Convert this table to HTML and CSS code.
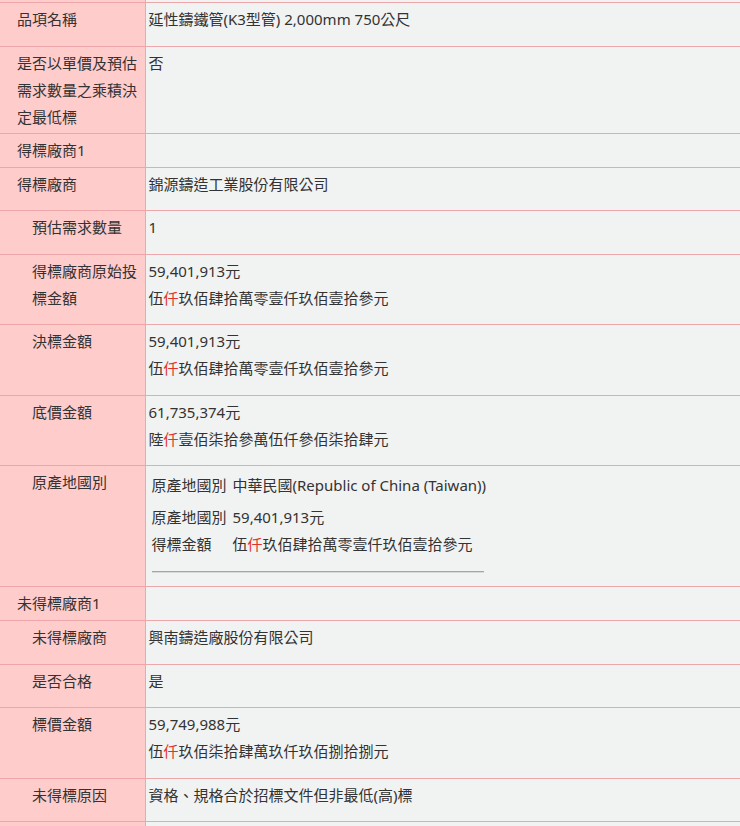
FILE: index.html
```html
<!DOCTYPE html>
<html lang="zh-Hant">
<head>
<meta charset="utf-8">
<title>決標公告</title>
<link rel="stylesheet" href="styles.css">
</head>
<body>
<table class="grid">
  <colgroup><col class="c-label"><col class="c-value"></colgroup>
  <tr class="stub"><td class="label"></td><td class="value"></td></tr>
  <tr>
    <td class="label">品項名稱</td>
    <td class="value filled">延性鑄鐵管(K3型管) 2,000mm 750公尺</td>
  </tr>
  <tr>
    <td class="label multi">是否以單價及預估需求數量之乘積決定最低標</td>
    <td class="value filled">否</td>
  </tr>
  <tr>
    <td class="label">得標廠商1</td>
    <td class="value"></td>
  </tr>
  <tr>
    <td class="label">得標廠商</td>
    <td class="value filled">錦源鑄造工業股份有限公司</td>
  </tr>
  <tr>
    <td class="label sub">預估需求數量</td>
    <td class="value filled">1</td>
  </tr>
  <tr>
    <td class="label sub">得標廠商原始投標金額</td>
    <td class="value filled">59,401,913元<br>伍<span class="red">仟</span>玖佰肆拾萬零壹仟玖佰壹拾參元</td>
  </tr>
  <tr>
    <td class="label sub">決標金額</td>
    <td class="value filled">59,401,913元<br>伍<span class="red">仟</span>玖佰肆拾萬零壹仟玖佰壹拾參元</td>
  </tr>
  <tr>
    <td class="label sub">底價金額</td>
    <td class="value filled">61,735,374元<br>陸<span class="red">仟</span>壹佰柒拾參萬伍仟參佰柒拾肆元</td>
  </tr>
  <tr>
    <td class="label sub">原產地國別</td>
    <td class="value filled origin-cell">
      <div class="origin">
        <div class="origin-row first"><span>原產地國別</span><span>中華民國(Republic of China (Taiwan))</span></div>
        <div class="origin-row second"><span>原產地國別</span><span>59,401,913元</span></div>
        <div class="origin-row"><span>得標金額</span><span>伍<span class="red">仟</span>玖佰肆拾萬零壹仟玖佰壹拾參元</span></div>
        <div class="rule"></div>
      </div>
    </td>
  </tr>
  <tr>
    <td class="label">未得標廠商1</td>
    <td class="value"></td>
  </tr>
  <tr>
    <td class="label sub">未得標廠商</td>
    <td class="value filled">興南鑄造廠股份有限公司</td>
  </tr>
  <tr>
    <td class="label sub">是否合格</td>
    <td class="value filled">是</td>
  </tr>
  <tr>
    <td class="label sub">標價金額</td>
    <td class="value filled">59,749,988元<br>伍<span class="red">仟</span>玖佰柒拾肆萬玖仟玖佰捌拾捌元</td>
  </tr>
  <tr>
    <td class="label sub">未得標原因</td>
    <td class="value filled">資格、規格合於招標文件但非最低(高)標</td>
  </tr>
  <tr class="tail">
    <td class="label sub"></td>
    <td class="value"></td>
  </tr>
</table>
</body>
</html>
```

FILE: styles.css
```css
html, body {
  margin: 0;
  padding: 0;
  background: #f1f2f2;
}

body {
  font-family: "Noto Sans", "Noto Sans CJK TC", sans-serif;
  font-size: 15px;
  color: #333;
}

.grid {
  width: 100%;
  border-collapse: collapse;
  table-layout: fixed;
}

.c-label { width: 145px; }

.grid td {
  border: 1px solid #eda6aa;
  line-height: 27px;
  padding: 3px 3px 3px 3px;
  vertical-align: top;
  word-break: break-all;
}

.grid tr:first-child td { border-top: none; }
.grid td:last-child { border-right: none; }
.grid td:first-child { border-left: none; }

.stub td {
  height: 2px;
  padding: 0;
  line-height: 0;
}

.tail td {
  height: 40px;
}

.label {
  background: #ffcccc;
  padding-left: 17px !important;
  padding-right: 6px !important;
}

.label.multi {
  padding-bottom: 2px;
}

.label.sub {
  padding-left: 32px !important;
}

.value {
  background: #f1f2f2;
}

.value.filled {
  padding-bottom: 12.5px;
}

.red {
  color: #e3322d;
}

.origin {
  padding-left: 3px;
}

.origin-row {
  display: grid;
  grid-template-columns: 76px 1fr;
  column-gap: 5px;
}

.origin-row.first {
  margin-top: 3px;
}

.origin-row.second {
  margin-top: 5px;
}

.origin-cell {
  padding-bottom: 3px !important;
}

.rule {
  width: 332px;
  height: 0;
  border-top: 1px solid #a6a6a6;
  border-bottom: 1px solid #d8d8d8;
  margin-top: 13px;
  margin-bottom: 10px;
}
```
